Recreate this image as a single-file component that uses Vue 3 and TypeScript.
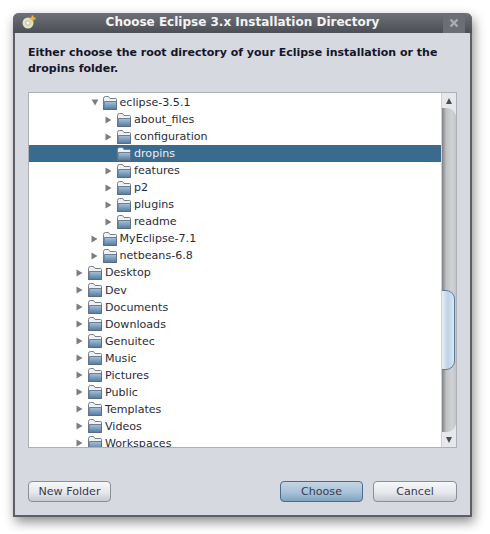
<script setup lang="ts">
interface Row { name: string; level: number; arrow: 'none' | 'right' | 'down'; selected?: boolean }
const rows: Row[] = [
  { name: 'eclipse-3.5.1', level: 1, arrow: 'down' },
  { name: 'about_files', level: 2, arrow: 'right' },
  { name: 'configuration', level: 2, arrow: 'right' },
  { name: 'dropins', level: 2, arrow: 'none', selected: true },
  { name: 'features', level: 2, arrow: 'right' },
  { name: 'p2', level: 2, arrow: 'right' },
  { name: 'plugins', level: 2, arrow: 'right' },
  { name: 'readme', level: 2, arrow: 'right' },
  { name: 'MyEclipse-7.1', level: 1, arrow: 'right' },
  { name: 'netbeans-6.8', level: 1, arrow: 'right' },
  { name: 'Desktop', level: 0, arrow: 'right' },
  { name: 'Dev', level: 0, arrow: 'right' },
  { name: 'Documents', level: 0, arrow: 'right' },
  { name: 'Downloads', level: 0, arrow: 'right' },
  { name: 'Genuitec', level: 0, arrow: 'right' },
  { name: 'Music', level: 0, arrow: 'right' },
  { name: 'Pictures', level: 0, arrow: 'right' },
  { name: 'Public', level: 0, arrow: 'right' },
  { name: 'Templates', level: 0, arrow: 'right' },
  { name: 'Videos', level: 0, arrow: 'right' },
  { name: 'Workspaces', level: 0, arrow: 'right' },
]
const indent = (level: number) => `${47 + level * 14.5}px`
</script>

<template>
  <div class="page">
    <div class="window">
      <header class="titlebar">
        <svg class="app-icon" width="16" height="16" viewBox="0 0 16 16">
          <circle cx="7" cy="9" r="5.5" fill="#e4e2c4" />
          <circle cx="7" cy="9" r="2.2" fill="#f6f5e8" stroke="#a8a890" stroke-width="0.7" />
          <path d="M11.5 1.5v6M8.5 4.5h6" stroke="#e6b93c" stroke-width="2" />
        </svg>
        <span class="title">Choose Eclipse 3.x Installation Directory</span>
        <div class="close">
          <svg width="10" height="10" viewBox="0 0 10 10">
            <path d="M1.5 1.5l7 7M8.5 1.5l-7 7" stroke="#a9adb3" stroke-width="2.4" />
          </svg>
        </div>
      </header>
      <div class="body">
        <p class="message">Either choose the root directory of your Eclipse installation or the dropins folder.</p>
        <div class="tree-box">
          <div class="tree">
            <div
              v-for="row in rows"
              :key="row.name"
              class="row"
              :class="{ selected: row.selected }"
              :style="{ paddingLeft: indent(row.level) }"
            >
              <span class="arrow-slot">
                <svg v-if="row.arrow === 'right'" width="7" height="8" viewBox="0 0 7 8">
                  <path d="M0.5 0.5L6.5 4L0.5 7.5Z" fill="#7a7d82" />
                </svg>
                <svg v-else-if="row.arrow === 'down'" width="8" height="7" viewBox="0 0 8 7">
                  <path d="M0.5 0.5H7.5L4 6.5Z" fill="#7a7d82" />
                </svg>
              </span>
              <svg class="folder" width="16" height="16" viewBox="0 0 16 16">
                <defs>
                  <linearGradient id="fg" x1="0" y1="0" x2="0" y2="1">
                    <stop offset="0" stop-color="#a9c2d8" />
                    <stop offset="1" stop-color="#4f7ba3" />
                  </linearGradient>
                </defs>
                <path d="M1.5 14.5V3.5Q1.5 1.5 3.5 1.5H6.5L8 3.5H13.5Q14.5 3.5 14.5 4.5V14.5Z" fill="#eef0f3" stroke="#75808c" />
                <path d="M1.5 14.5L2.5 6.5H14.5V14.5Z" fill="url(#fg)" stroke="#56677a" stroke-width="0.8" />
              </svg>
              <span class="label">{{ row.name }}</span>
            </div>
          </div>
          <div class="scrollbar">
            <div class="step">
              <svg width="6" height="6" viewBox="0 0 6 6"><path d="M3 0L6 6H0Z" fill="#4a4d52" /></svg>
            </div>
            <div class="track"><div class="thumb"></div></div>
            <div class="step">
              <svg width="6" height="6" viewBox="0 0 6 6"><path d="M0 0H6L3 6Z" fill="#4a4d52" /></svg>
            </div>
          </div>
        </div>
        <footer class="actions">
          <button class="btn">New Folder</button>
          <div class="spacer"></div>
          <button class="btn primary">Choose</button>
          <button class="btn wide">Cancel</button>
        </footer>
      </div>
    </div>
  </div>
</template>

<style>
html, body { margin: 0; background: #fff; }
</style>

<style scoped>
.page {
  width: 490px;
  height: 534px;
  padding: 13px 0 0 13px;
  box-sizing: border-box;
  overflow: hidden;
  font-family: "DejaVu Sans", sans-serif;
}
.window {
  width: 459px;
  height: 504px;
  box-sizing: border-box;
  display: flex;
  flex-direction: column;
  border: 2px solid #5c6066;
  border-top: 0;
  border-radius: 6px 6px 0 0;
  background: #d6d9e0;
  box-shadow: 2px 5px 12px rgba(0, 0, 0, 0.45);
}
.titlebar {
  height: 20px;
  margin: 0 -2px;
  padding: 0 0 2px 8px;
  box-sizing: border-box;
  flex: none;
  display: flex;
  align-items: center;
  border-radius: 6px 6px 0 0;
  background: linear-gradient(#6e7278, #4b4f55);
  color: #f2f3f5;
}
.app-icon { flex: none; }
.title {
  flex: 1;
  padding-left: 5px;
  text-align: center;
  font-size: 12px;
  font-weight: 700;
  white-space: nowrap;
}
.close {
  width: 22px;
  height: 20px;
  margin: 2px 7px 0 0;
  display: flex;
  align-items: center;
  justify-content: center;
  background: #6b6f75;
}
.body {
  flex: 1;
  display: flex;
  flex-direction: column;
  padding: 12px 13px 13px;
  min-height: 0;
}
.message {
  margin: 0;
  height: 47px;
  font-size: 11px;
  font-weight: 700;
  line-height: 16px;
  color: #15152a;
}
.tree-box {
  height: 356px;
  box-sizing: border-box;
  flex: none;
  display: flex;
  background: #fff;
  border: 1px solid #adb0b6;
  overflow: hidden;
}
.tree {
  flex: 1;
  min-width: 0;
  padding-top: 1px;
  overflow: hidden;
}
.row {
  height: 17.05px;
  display: flex;
  align-items: center;
  color: #2b2b38;
  font-size: 11.1px;
  white-space: nowrap;
}
.row.selected {
  background: #3a6a8e;
  color: #e9eef2;
}
.arrow-slot {
  width: 11px;
  flex: none;
  display: flex;
  align-items: center;
}
.folder {
  flex: none;
  margin-right: 2px;
}
.scrollbar {
  width: 14px;
  flex: none;
  display: flex;
  flex-direction: column;
  border-left: 1px solid #d0d2d6;
  background: #e6e8ec;
}
.step {
  height: 15px;
  flex: none;
  display: flex;
  align-items: center;
  justify-content: center;
}
.track {
  flex: 1;
  padding-top: 182px;
  border-radius: 0 9px 9px 0;
  background: linear-gradient(90deg, #7d8084, #bfc1c5 30%, #d0d2d5 70%, #c2c4c8);
}
.thumb {
  height: 80px;
  box-sizing: border-box;
  margin-right: 1px;
  border: 1px solid #5a7d9c;
  border-left: 0;
  border-radius: 0 9px 9px 0;
  background: linear-gradient(90deg, #e8eef3, #bdd3e6 50%, #dbe8f2);
}
.actions {
  margin-top: auto;
  display: flex;
  gap: 10px;
}
.spacer { flex: 1; }
.btn {
  width: 83px;
  height: 21px;
  padding: 0;
  border: 1px solid #8b8f96;
  border-radius: 4px;
  background: linear-gradient(#f6f7f9, #e6e8ec 55%, #c6cad1);
  color: #3a3a4a;
  font-family: inherit;
  font-size: 11.1px;
}
.btn.wide { width: 84px; }
.btn.primary {
  border-color: #4d6c88;
  background: linear-gradient(#c4d5e3, #a8c2d8 55%, #7fa3c1);
}
</style>
